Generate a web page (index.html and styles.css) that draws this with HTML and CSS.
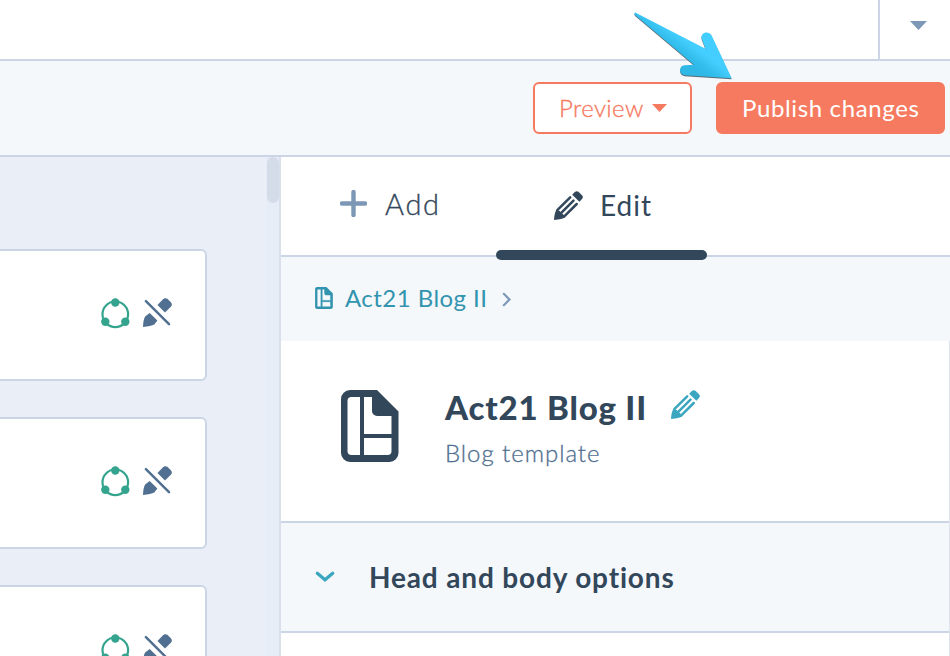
FILE: index.html
```html
<!DOCTYPE html>
<html lang="en">
<head>
<meta charset="utf-8">
<title>Template editor</title>
<link rel="stylesheet" href="styles.css">
</head>
<body>
<svg class="defs" aria-hidden="true">
  <symbol id="template" viewBox="0 0 58 72">
    <path fill="currentColor" fill-rule="evenodd" d="M9 0H36L57.5 21.5V63a9 9 0 0 1-9 9H9a9 9 0 0 1-9-9V9A9 9 0 0 1 9 0ZM10.500 7a4 4 0 0 0-4 4V61a4 4 0 0 0 4 4H19V7ZM23 7V44H50.500V26H36a5 5 0 0 1-5-5V7ZM23 48V65H46.500a4 4 0 0 0 4-4V48Z"/>
  </symbol>
  <symbol id="pencil" viewBox="0 0 29 29">
    <g fill="none" stroke="currentColor" stroke-width="2.500" stroke-linecap="round"><path d="M16.200 6.300 3.800 18.700M19.500 9.700 7 22.200M22.700 13 10.300 25.400"/></g>
    <path fill="currentColor" d="M2.600 18.300 6 20.200 7 22.200 9 23 11 26.200Q8.500 28.300 0 29Q.4 22 2.600 18.300ZM18.200 3.800 20.800 1.100Q22.500-.6 24.500.7L28.200 4.400Q29.600 6.200 28 8.100L25.400 10.700Z"/>
  </symbol>
  <symbol id="pencil-off" viewBox="0 0 29 29">
    <path d="M2.900 3.100 26 26.200" fill="none" stroke="currentColor" stroke-width="2.500" stroke-linecap="round"/>
    <path fill="currentColor" d="M14.500 7 20 1.200Q22-.5 24.400.8L28.100 4.600Q29.600 6.500 28.100 8.600L22 14.500ZM6.700 15 14.400 22.500 11.300 26.600Q8 28.500 0 29Q.2 21 2.400 18.300Z"/>
  </symbol>
  <symbol id="share" viewBox="0 0 29 31">
    <circle cx="14.300" cy="16.300" r="12.800" fill="none" stroke="currentColor" stroke-width="2.200"/>
    <g fill="currentColor"><circle cx="14.300" cy="4.500" r="4.200"/><circle cx="4.300" cy="23.800" r="4.200"/><circle cx="24.300" cy="23.800" r="4.200"/></g>
  </symbol>
</svg>
<div class="app">
  <header class="topbar"><div class="account"><svg width="17" height="9" viewBox="0 0 17 9"><path d="M0 0H17L8.500 9Z" fill="currentColor"/></svg></div></header>
  <div class="toolbar">
    <button class="btn preview"><span>Preview</span><svg width="15" height="8" viewBox="0 0 15 8"><path d="M0 0H15L7.500 8Z" fill="currentColor"/></svg></button>
    <button class="btn publish"><span>Publish changes</span></button>
    <svg class="pointer" width="100" height="70" viewBox="0 0 100 70">
      <defs><linearGradient id="blue" gradientUnits="userSpaceOnUse" x1="59" y1="55" x2="70" y2="40"><stop offset="0" stop-color="#2fb7e6"/><stop offset=".45" stop-color="#32bdec"/><stop offset="1" stop-color="#43ceff"/></linearGradient></defs>
      <path fill="url(#blue)" d="M5.200 1.600 75.500 37.700 71.900 28.300C69.500 21.500 78.500 19 81.500 24.200L101.700 67.300 54.700 64.300C48.500 63.500 48.500 54.700 54.700 54.300L64 53.700 5 4C4 2.800 4.500 1.500 5.200 1.600Z"/>
    </svg>
  </div>
  <main class="work">
    <section class="canvas">
      <div class="modules">
        <div class="module"><svg class="share"><use href="#share"/></svg><svg class="off"><use href="#pencil-off"/></svg></div>
        <div class="module"><svg class="share"><use href="#share"/></svg><svg class="off"><use href="#pencil-off"/></svg></div>
        <div class="module"><svg class="share"><use href="#share"/></svg><svg class="off"><use href="#pencil-off"/></svg></div>
      </div>
      <div class="track"><div class="thumb"></div></div>
    </section>
    <aside class="panel">
      <nav class="tabs">
        <div class="tab add"><svg width="27" height="27" viewBox="0 0 27 27"><path d="M13.500 2V25M2 13.500H25" stroke="currentColor" stroke-width="4.400" stroke-linecap="round"/></svg><span>Add</span></div>
        <div class="tab edit"><svg class="pen"><use href="#pencil"/></svg><span>Edit</span></div>
      </nav>
      <div class="crumbs"><svg class="crumb-icon"><use href="#template"/></svg><span>Act21 Blog II</span><svg class="next" width="10" height="15" viewBox="0 0 10 15"><path d="M1.800 1.800 7.500 7.500 1.800 13.200" fill="none" stroke="currentColor" stroke-width="2.200" stroke-linecap="round"/></svg></div>
      <div class="body">
        <div class="info">
          <svg class="doc"><use href="#template"/></svg>
          <div class="names">
            <div class="title"><h1><span>Act21 Blog II</span></h1><svg class="pen"><use href="#pencil"/></svg></div>
            <p><span>Blog template</span></p>
          </div>
        </div>
        <div class="options"><svg width="20" height="12" viewBox="0 0 20 12"><path d="M2.300 2.300 10 8.800 17.700 2.300" fill="none" stroke="currentColor" stroke-width="3.200" stroke-linecap="round"/></svg><h2><span>Head and body options</span></h2></div>
      </div>
    </aside>
  </main>
</div>
</body>
</html>
```
FILE: styles.css
```css
* { box-sizing: border-box; }
body { margin: 0; font-family: Lato, "Liberation Sans", sans-serif; color: #33475b; background: #fff; }
svg { display: block; flex: none; }
h1, h2, p { margin: 0; white-space: nowrap; }
.defs { position: absolute; width: 0; height: 0; }
.app { width: 950px; height: 656px; overflow: hidden; display: flex; flex-direction: column; }
.topbar { flex: none; height: 61px; border-bottom: 2px solid #ccd5e5; display: flex; justify-content: flex-end; }
.account { width: 72px; border-left: 2px solid #ccd5e5; padding: 21px 0 0 30px; color: #7c98b6; }
.toolbar { position: relative; flex: none; height: 96px; border-bottom: 2px solid #ccd5e5; background: #f4f8fb; display: flex; justify-content: flex-end; gap: 24px; padding: 21px 5px 0 0; }
.btn { height: 52px; border: 2px solid #f67a5f; border-radius: 6px; font: 300 24px/46px Lato, sans-serif; padding: 0 24px; display: flex; align-items: center; white-space: nowrap; }
.btn span { padding-bottom: 1px; }
.preview { width: 159px; background: #fff; color: #f67a5f; gap: 8px; font-weight: 300; letter-spacing: .4px; -webkit-text-stroke: .35px #f67a5f; }
.publish { width: 229px; background: #f67a5f; color: #fff; font-weight: 400; letter-spacing: .64px; }
.pointer { position: absolute; left: 630px; top: -50px; overflow: visible; filter: drop-shadow(0 1px .5px #596b76); }
.work { flex: 1; min-height: 0; display: flex; }
.canvas { width: 281px; flex: none; background: #eaeff7; border-right: 2px solid #d9e0ec; display: flex; justify-content: space-between; overflow: hidden; }
.modules { width: 207px; padding-top: 92px; display: flex; flex-direction: column; gap: 36px; }
.module { flex: none; height: 132px; border: 2px solid #ccd5e5; border-left: 0; border-radius: 0 6px 6px 0; background: #fff; display: flex; justify-content: flex-end; gap: 13px; padding: 47px 33px 0 0; }
.share { width: 29px; height: 31px; color: #35a48e; }
.off { width: 29px; height: 29px; color: #516f90; }
.track { width: 13px; background: #e6edf6; padding-left: 1px; }
.thumb { height: 46px; border-radius: 6px; background: #d4dcea; }
.panel { flex: 1; min-width: 0; }
.tabs { height: 100px; border-bottom: 2px solid #ccd5e5; display: flex; padding-left: 4px; }
.tab { width: 211px; position: relative; display: flex; font-size: 28px; line-height: 34px; padding-top: 31px; letter-spacing: .6px; }
.add { padding: 30px 0 0 55px; gap: 18px; font-size: 29px; font-weight: 300; letter-spacing: 1.7px; -webkit-text-stroke: .35px #33475b; }
.add svg { color: #7c98b6; margin-top: 3px; }
.edit { padding-left: 58px; gap: 17px; letter-spacing: 1px; }
.edit .pen { margin-top: 3px; }
.edit::after { content: ""; position: absolute; left: 0; right: 0; top: 93px; height: 10px; border-radius: 5px; background: #33475b; }
.pen { width: 29px; height: 29px; }
.crumbs { height: 84px; background: #f4f8fb; color: #3294ae; display: flex; align-items: center; padding-left: 34px; font-size: 24px; letter-spacing: .45px; }
.crumbs span { padding-bottom: 3px; }
.crumb-icon { width: 18px; height: 22px; margin: -2px 12px 0 0; stroke: currentColor; stroke-width: 1.8px; overflow: visible; }
.next { margin-left: 15px; color: #7c98b6; }
.body { height: 315px; border-right: 1px solid #dfe4ec; }
.info { height: 182px; border-bottom: 2px solid #ccd5e5; display: flex; padding: 49px 0 0 60px; }
.doc { width: 58px; height: 72px; margin-right: 46px; }
.title { display: flex; gap: 24px; }
h1 { font-size: 33px; line-height: 40px; font-weight: 900; margin-top: -3px; letter-spacing: .8px; }
.title .pen { color: #3aa6bf; }
p { font-size: 24px; line-height: 30px; font-weight: 300; color: #516f90; margin-top: 11px; letter-spacing: .95px; -webkit-text-stroke: .3px #516f90; }
.options { height: 110px; background: #f4f8fb; border-bottom: 2px solid #ccd5e5; color: #3aa6bf; display: flex; align-items: center; gap: 34px; padding-left: 34px; }
h2 { font-size: 28px; line-height: 36px; font-weight: 700; color: #33475b; letter-spacing: .84px; }
```
